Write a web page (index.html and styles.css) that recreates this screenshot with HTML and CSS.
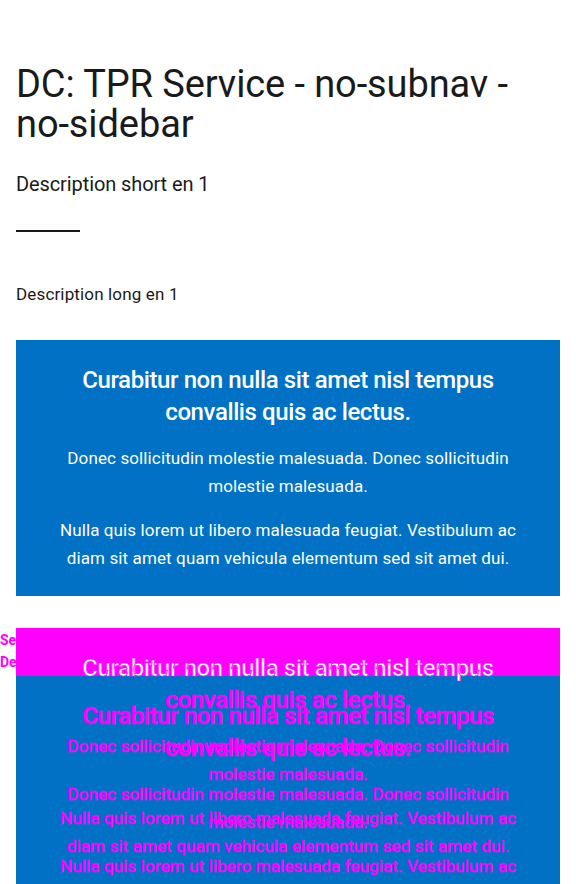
FILE: index.html
```html
<!DOCTYPE html>
<html lang="en">
<head>
<meta charset="utf-8">
<title>DC: TPR Service - no-subnav - no-sidebar</title>
<link rel="stylesheet" href="styles.css">
</head>
<body>
<main class="page">
  <header class="intro">
    <h1 class="intro__title">DC: TPR Service - no-subnav - <span class="nowrap">no-sidebar</span></h1>
    <p class="intro__short">Description short en 1</p>
    <hr class="intro__rule">
    <p class="intro__long">Description long en 1</p>
  </header>

  <section class="promo">
    <h2 class="promo__title">Curabitur non nulla sit amet nisl tempus convallis quis ac lectus.</h2>
    <p class="promo__text">Donec sollicitudin molestie malesuada. Donec sollicitudin molestie malesuada.</p>
    <p class="promo__text">Nulla quis lorem ut libero malesuada feugiat. Vestibulum ac diam sit amet quam vehicula elementum sed sit amet dui.</p>
  </section>

  <section class="promo promo--diff">
    <p class="diff-label">Section title<br>Description text</p>
    <div class="diff-band"></div>
    <div class="diff-layer">
      <h2 class="promo__title">Curabitur non nulla sit amet nisl tempus convallis quis ac lectus.</h2>
      <p class="promo__text">Donec sollicitudin molestie malesuada. Donec sollicitudin molestie malesuada.</p>
      <p class="promo__text">Nulla quis lorem ut libero malesuada feugiat. Vestibulum ac diam sit amet quam vehicula elementum sed sit amet dui.</p>
    </div>
    <div class="diff-layer diff-layer--shift">
      <h2 class="promo__title">Curabitur non nulla sit amet nisl tempus convallis quis ac lectus.</h2>
      <p class="promo__text">Donec sollicitudin molestie malesuada. Donec sollicitudin molestie malesuada.</p>
      <p class="promo__text">Nulla quis lorem ut libero malesuada feugiat. Vestibulum ac diam sit amet quam vehicula elementum sed sit amet dui.</p>
    </div>
  </section>
</main>
</body>
</html>
```

FILE: styles.css
```css
* { box-sizing: border-box; }

html, body {
  margin: 0;
  padding: 0;
  background: #ffffff;
}

body {
  font-family: Roboto, "Liberation Sans", sans-serif;
  color: #1a1a1a;
  overflow: hidden;
}

.page {
  padding: 0 16px;
}

.nowrap {
  white-space: nowrap;
}

.intro {
  display: flex;
  flex-direction: column;
  align-items: flex-start;
}

.intro__title {
  margin: 64px 0 0;
  font-size: 38px;
  line-height: 40px;
  font-weight: 400;
  letter-spacing: -0.1px;
  color: #1a1a1a;
}

.intro__short {
  margin: 26px 0 0;
  font-size: 20px;
  line-height: 28px;
  letter-spacing: -0.1px;
}

.intro__rule {
  margin: 32px 0 0;
  width: 64px;
  height: 2px;
  border: 0;
  background: #1a1a1a;
}

.intro__long {
  margin: 50px 0 0;
  font-size: 17px;
  line-height: 24px;
  letter-spacing: 0.15px;
}

.promo {
  margin-top: 34px;
  background: #0071c4;
  color: #ffffff;
  padding: 24px 40px;
  text-align: center;
}

.promo + .promo {
  margin-top: 32px;
}

.promo__title {
  margin: 0 auto 16px;
  max-width: 430px;
  font-size: 24px;
  line-height: 32px;
  font-weight: 500;
  letter-spacing: -0.4px;
}

.promo__text {
  margin: 0 auto 16px;
  max-width: 464px;
  font-size: 17px;
  line-height: 28px;
  letter-spacing: 0.12px;
}

.promo__text:last-child {
  margin-bottom: 0;
}

/* Comparison overlay on the second block */
.promo--diff {
  position: relative;
}

.diff-label {
  position: absolute;
  left: -16px;
  top: 1px;
  z-index: 1;
  margin: 0;
  font-size: 14px;
  line-height: 22px;
  font-weight: 700;
  color: #ff00ff;
  text-align: left;
  white-space: nowrap;
}

.diff-band {
  position: absolute;
  left: 0;
  right: 0;
  top: 0;
  height: 48px;
  z-index: 2;
  background: #ff00ff;
}

.diff-layer {
  position: relative;
  z-index: 3;
  color: #ff00ff;
  -webkit-text-stroke: 0.6px #ff00ff;
}

.diff-layer > .promo__title:first-child::first-line {
  color: #ffffff;
  -webkit-text-stroke: 0;
}

.diff-layer--shift {
  position: absolute;
  left: 40px;
  right: 40px;
  top: 72px;
}

.diff-layer--shift > .promo__title:first-child::first-line {
  color: #ff00ff;
}
```
